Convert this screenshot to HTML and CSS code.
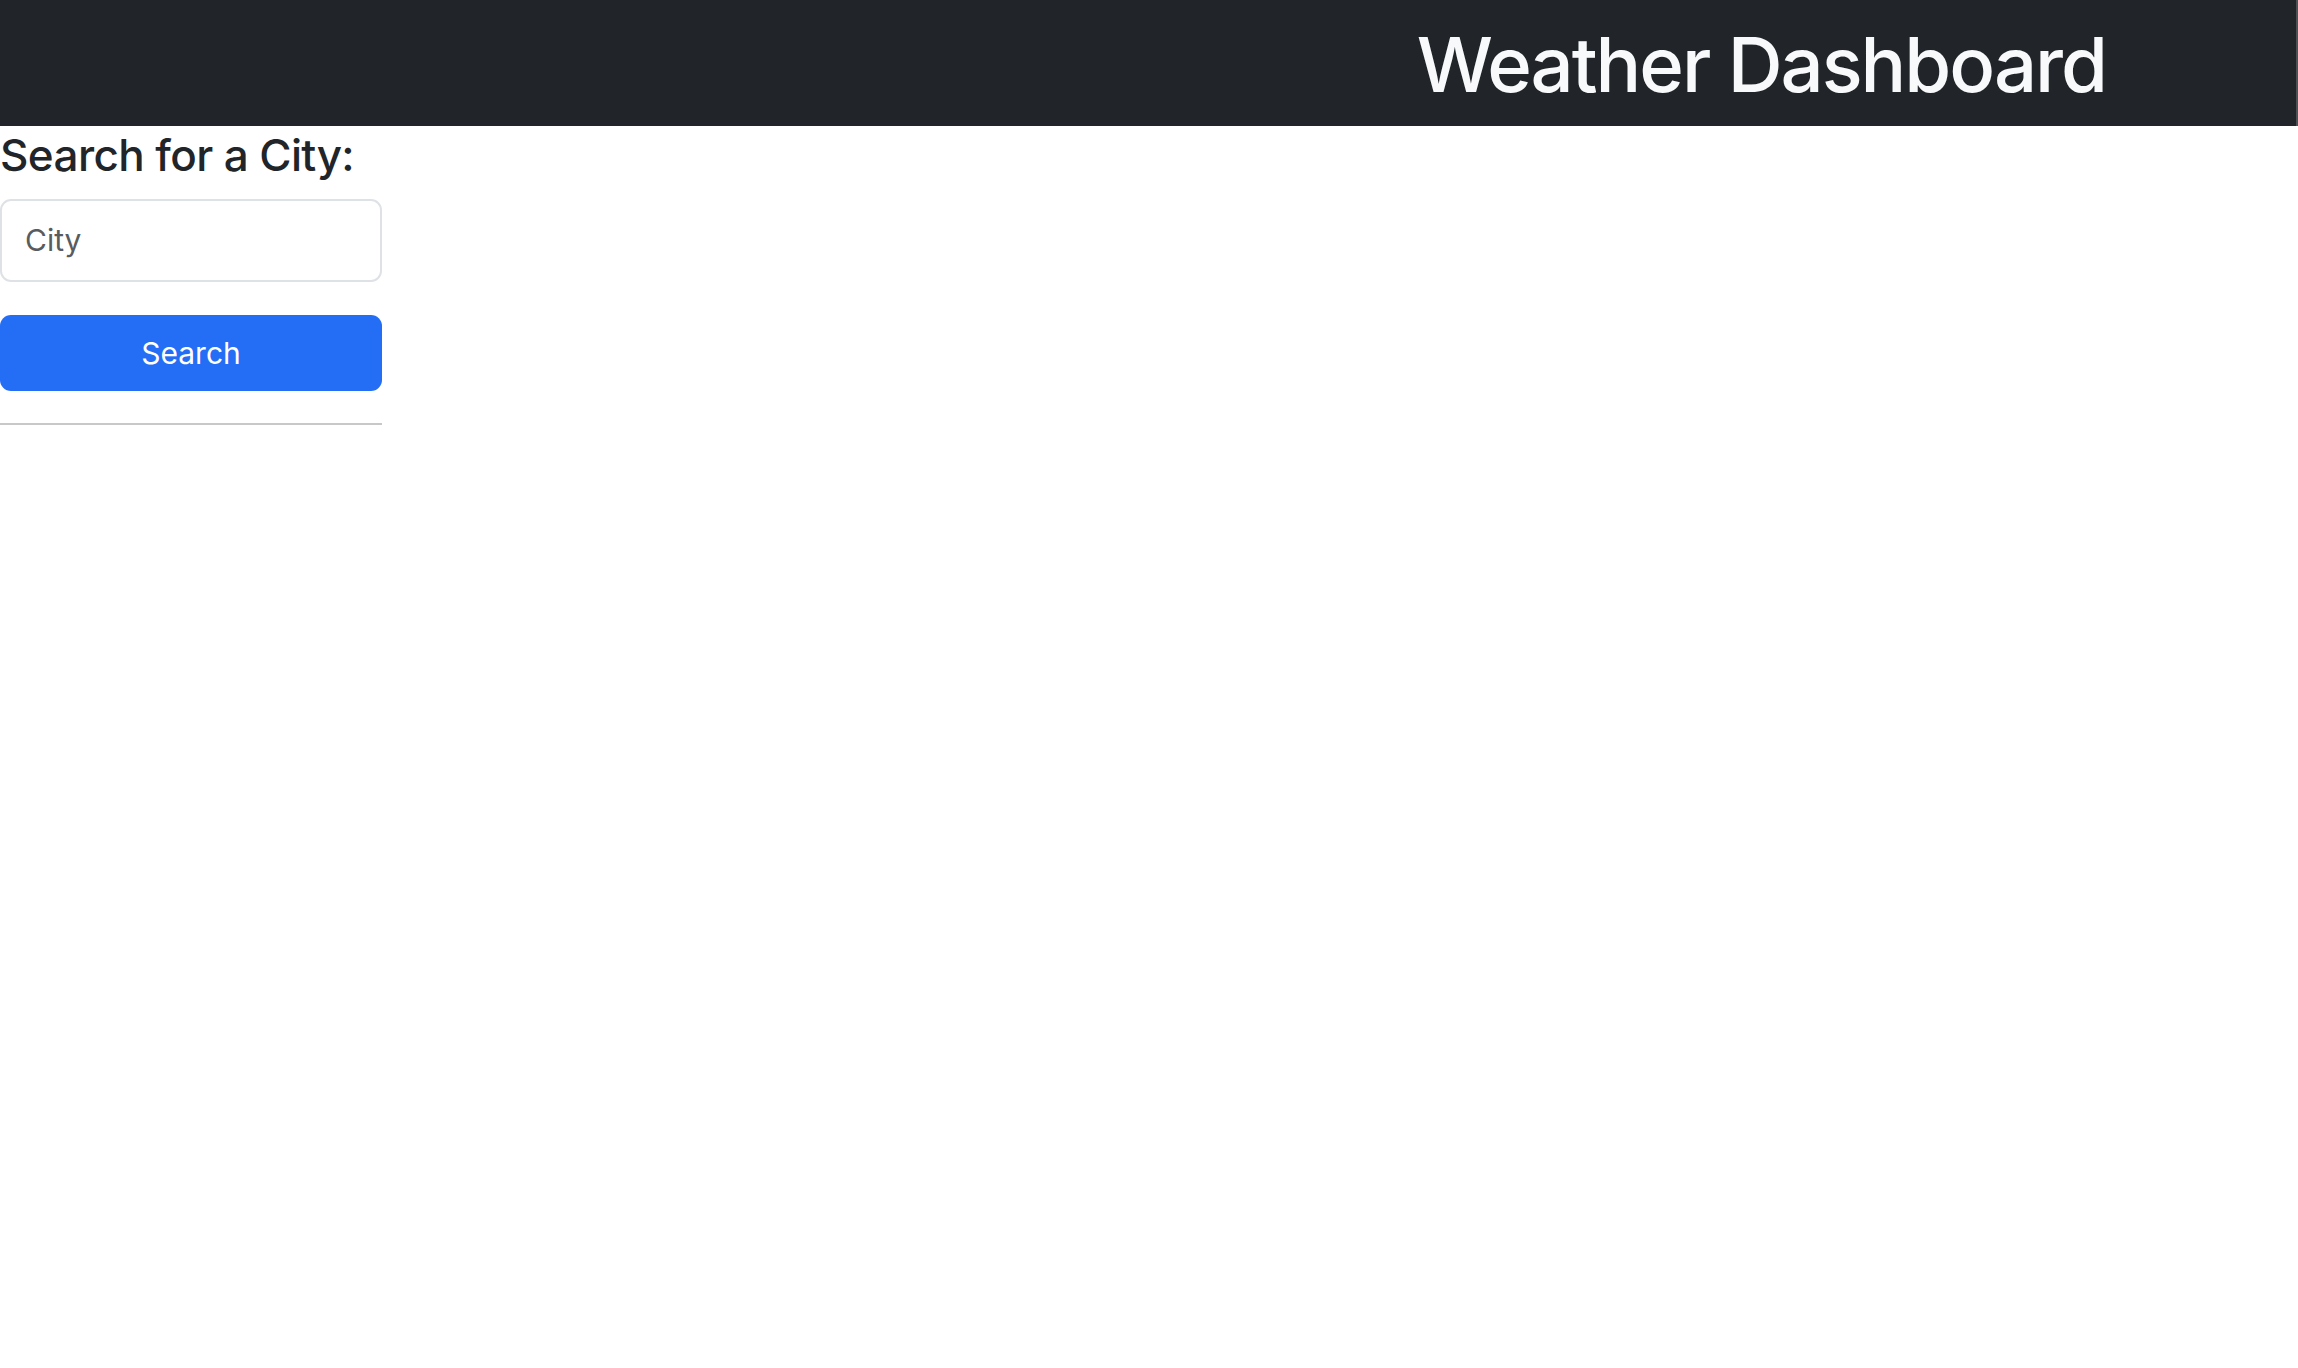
FILE: index.html
```html
<!DOCTYPE html>
<html lang="en">
<head>
<meta charset="utf-8">
<title>Weather Dashboard</title>
<link rel="stylesheet" href="styles.css">
</head>
<body>
<header class="topbar">
  <h1 class="topbar-title">Weather Dashboard</h1>
</header>
<main class="layout">
  <aside class="sidebar">
    <h2 class="sidebar-heading">Search for a City:</h2>
    <input class="city-input" type="text" placeholder="City">
    <button class="search-btn" type="button">Search</button>
    <hr class="divider">
  </aside>
</main>
</body>
</html>
```

FILE: styles.css
```css
* { box-sizing: border-box; }

html, body {
  margin: 0;
  padding: 0;
  background: #ffffff;
  font-family: Inter, "Liberation Sans", Arial, sans-serif;
  color: #212529;
}

.topbar {
  height: 126px;
  background: #212529;
  border-right: 2px solid #4f5054;
  display: flex;
  justify-content: flex-end;
  align-items: flex-start;
  padding: 26px 190px 0 0;
}

.topbar-title {
  margin: 0;
  font-size: 76px;
  line-height: 1;
  font-weight: 500;
  letter-spacing: -2px;
  color: #f8f9fa;
}

.layout {
  display: flex;
}

.sidebar {
  width: 382px;
  display: flex;
  flex-direction: column;
}

.sidebar-heading {
  margin: 3px 0 17px;
  font-size: 44px;
  line-height: 1.2;
  font-weight: 500;
  letter-spacing: -0.6px;
  color: #212529;
  white-space: nowrap;
}

.city-input {
  width: 100%;
  height: 83px;
  margin: 0;
  padding: 0 23px;
  border: 2px solid #dee2e6;
  border-radius: 11px;
  font-family: inherit;
  font-size: 30px;
  color: #212529;
  background: #fff;
  outline: none;
}

.city-input::placeholder {
  color: #595c5f;
  opacity: 1;
}

.search-btn {
  width: 100%;
  height: 76px;
  margin: 33px 0 0;
  border: none;
  border-radius: 11px;
  background: #246df5;
  color: #ffffff;
  font-family: inherit;
  font-size: 30px;
  cursor: pointer;
}

.divider {
  width: 100%;
  margin: 32px 0 0;
  border: none;
  border-top: 2px solid #c8c8c8;
  height: 0;
}
```
